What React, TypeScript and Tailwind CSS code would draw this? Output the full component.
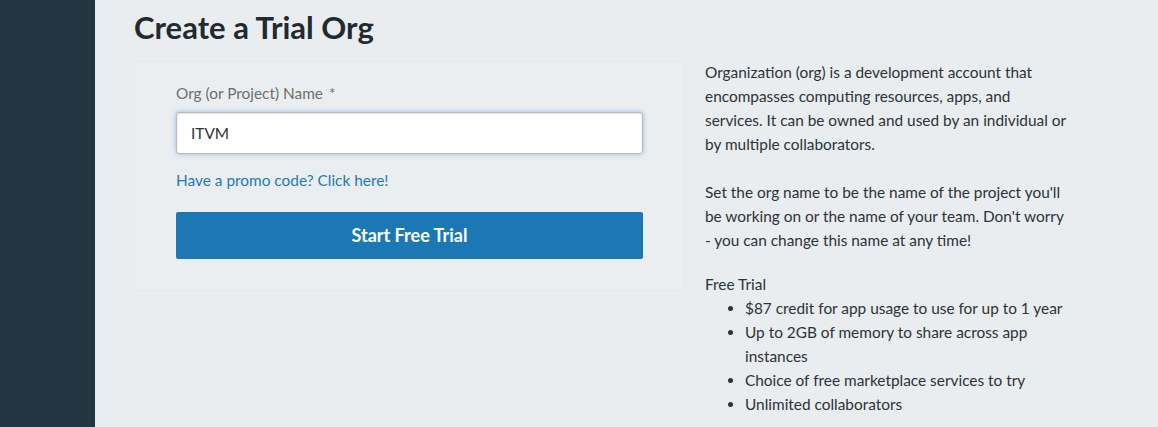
export default function App() {
  return (
    <div
      className="flex h-[427px] w-[1158px] overflow-hidden bg-[#e9edf0] text-[#2d3338]"
      style={{ fontFamily: "Lato, 'Open Sans', sans-serif" }}
    >
      <aside className="w-[95px] shrink-0 bg-[#233540]" />

      <main className="flex-1 pl-[39px]">
        <h1 className="mt-[8px] text-[31px] font-bold leading-[38px] text-[#22292f]">
          Create a Trial Org
        </h1>

        <div className="mt-[15px] flex">
          <div className="h-[230px] w-[551px] shrink-0 border border-[#e5e9ec] bg-[#ebeef0] px-[41px] pt-[21px]">
            <label className="block text-[15.4px] leading-[20px] text-[#6e6e6e]">
              Org (or Project) Name <span className="ml-[2px]">*</span>
            </label>
            <input
              defaultValue="ITVM"
              className="mt-[9px] h-[42px] w-full rounded-[3px] border border-[#b7bcc0] bg-white px-[14px] text-[15.4px] text-[#333] shadow-[0_0_5px_rgba(74,144,200,0.55),inset_0_1px_2px_rgba(0,0,0,0.12)] outline-none"
            />
            <a className="mt-[16px] block text-[15.4px] leading-[20px] text-[#1b7bb8]">
              Have a promo code? Click here!
            </a>
            <button className="mt-[22px] h-[47px] w-full rounded-[2px] bg-[#1b78b4] text-[18px] font-bold text-white">
              Start Free Trial
            </button>
          </div>

          <div className="-mt-[1px] ml-[20px] w-[362px] text-[15.4px] leading-[24px]">
            <p>
              Organization (org) is a development account that encompasses
              computing resources, apps, and services. It can be owned and used
              by an individual or by multiple collaborators.
            </p>
            <p className="mt-[24px]">
              Set the org name to be the name of the project you'll be working
              on or the name of your team. Don't worry - you can change this
              name at any time!
            </p>
            <p className="mt-[20px]">Free Trial</p>
            <ul className="list-disc pl-[40px]">
              <li>$87 credit for app usage to use for up to 1 year</li>
              <li>Up to 2GB of memory to share across app instances</li>
              <li>Choice of free marketplace services to try</li>
              <li>Unlimited collaborators</li>
            </ul>
          </div>
        </div>
      </main>
    </div>
  );
}
